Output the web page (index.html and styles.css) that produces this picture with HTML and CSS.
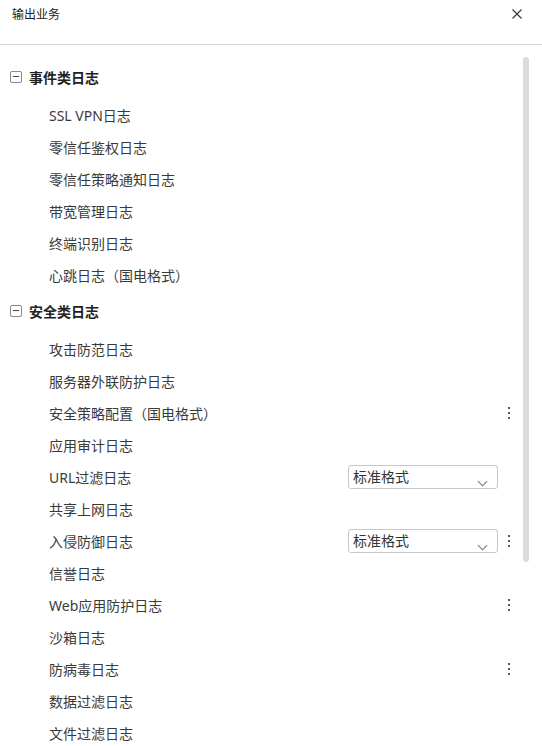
FILE: index.html
```html
<!DOCTYPE html>
<html lang="zh-CN">
<head>
  <meta charset="UTF-8">
  <title>输出业务</title>
  <link rel="stylesheet" href="styles.css">
</head>
<body>

<div class="dialog">
  <div class="dialog-head">
    <span class="dialog-title">输出业务</span>
    <span class="close">
      <svg width="10" height="10" viewBox="0 0 10 10"><path d="M0.5 0.5L9.5 9.5M9.5 0.5L0.5 9.5" stroke="#333" stroke-width="1.1" fill="none"/></svg>
    </span>
  </div>

  <div class="dialog-body">
    <div class="group">
      <div class="group-head"><span class="fold"></span>事件类日志</div>
      <div class="row"><span class="label">SSL VPN日志</span></div>
      <div class="row"><span class="label">零信任鉴权日志</span></div>
      <div class="row"><span class="label">零信任策略通知日志</span></div>
      <div class="row"><span class="label">带宽管理日志</span></div>
      <div class="row"><span class="label">终端识别日志</span></div>
      <div class="row"><span class="label">心跳日志（国电格式）</span></div>
    </div>

    <div class="group">
      <div class="group-head"><span class="fold"></span>安全类日志</div>
      <div class="row"><span class="label">攻击防范日志</span></div>
      <div class="row"><span class="label">服务器外联防护日志</span></div>
      <div class="row"><span class="label">安全策略配置（国电格式）</span><span class="more"><i></i><i></i><i></i></span></div>
      <div class="row"><span class="label">应用审计日志</span></div>
      <div class="row"><span class="label">URL过滤日志</span><span class="select">标准格式<span class="arrow"></span></span><span class="more blank"></span></div>
      <div class="row"><span class="label">共享上网日志</span></div>
      <div class="row"><span class="label">入侵防御日志</span><span class="select">标准格式<span class="arrow"></span></span><span class="more"><i></i><i></i><i></i></span></div>
      <div class="row"><span class="label">信誉日志</span></div>
      <div class="row"><span class="label">Web应用防护日志</span><span class="more"><i></i><i></i><i></i></span></div>
      <div class="row"><span class="label">沙箱日志</span></div>
      <div class="row"><span class="label">防病毒日志</span><span class="more"><i></i><i></i><i></i></span></div>
      <div class="row"><span class="label">数据过滤日志</span></div>
      <div class="row"><span class="label">文件过滤日志</span></div>
    </div>

    <div class="scrollbar"></div>
  </div>
</div>

</body>
</html>
```

FILE: styles.css
```css
body {
  margin: 0;
  font-family: "Noto Sans", "Noto Sans CJK SC", sans-serif;
  background: #fff;
  color: #333;
}

.dialog {
  width: 542px;
  height: 746px;
  overflow: hidden;
}

.dialog-head {
  display: flex;
  align-items: center;
  justify-content: space-between;
  height: 28px;
  padding: 0 20px 16px 12px;
  border-bottom: 1px solid #d4d4d4;
}

.dialog-title {
  font-size: 12px;
  color: #222;
}

.close {
  display: flex;
}

.dialog-body {
  position: relative;
  padding-top: 14px;
}

.group-head {
  display: flex;
  align-items: center;
  height: 36px;
  margin-bottom: 4px;
  padding-left: 10px;
  font-size: 14px;
  font-weight: bold;
  color: #222;
}

.group + .group {
  margin-top: 2px;
}

.fold {
  position: relative;
  width: 10px;
  height: 10px;
  border: 1px solid #888;
  border-radius: 2px;
  margin-right: 7px;
}

.fold::after {
  content: "";
  position: absolute;
  left: 2px;
  right: 2px;
  top: 4px;
  height: 1px;
  background: #444;
}

.row {
  display: flex;
  align-items: center;
  height: 32px;
  padding: 0 27px 0 49px;
  font-size: 14px;
  color: #3a3a3a;
}

.label {
  flex: 1;
}

.select {
  position: relative;
  width: 144px;
  height: 22px;
  line-height: 22px;
  padding-left: 4px;
  border: 1px solid #c8c8c8;
  border-radius: 3px;
  font-size: 14px;
  color: #333;
}

.arrow {
  position: absolute;
  right: 11px;
  top: 12px;
  width: 6px;
  height: 6px;
  border-right: 1px solid #777;
  border-bottom: 1px solid #777;
  transform: rotate(45deg);
}

.more {
  display: flex;
  flex-direction: column;
  align-items: center;
  gap: 3px;
  width: 12px;
  margin-left: auto;
}

.select + .more {
  margin-left: 5px;
}

.more i {
  display: block;
  width: 2px;
  height: 2px;
  background: #222;
  border-radius: 1px;
}

.scrollbar {
  position: absolute;
  left: 523px;
  top: 12px;
  width: 6px;
  height: 505px;
  border-radius: 3px;
  background: #dcdcdc;
}
```
